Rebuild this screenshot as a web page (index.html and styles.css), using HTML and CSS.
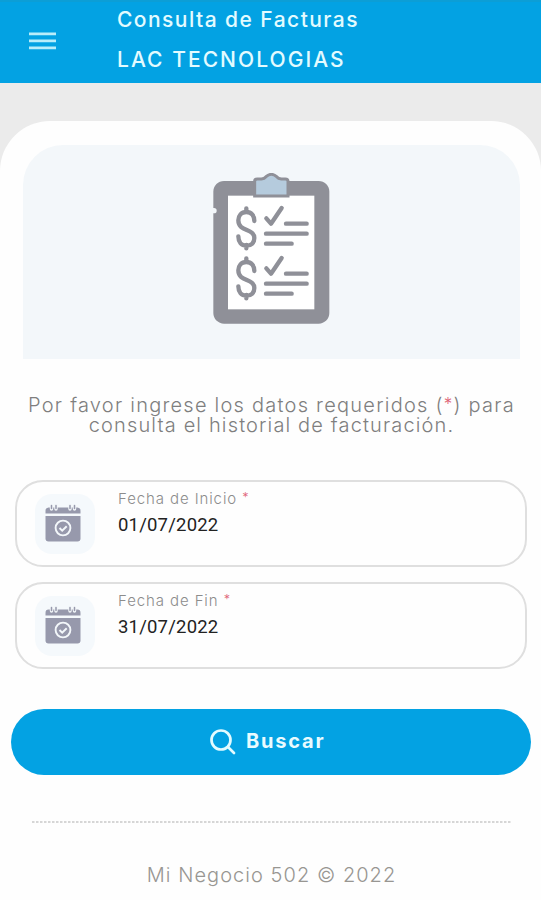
FILE: index.html
```html
<!DOCTYPE html>
<html lang="es">
<head>
<meta charset="utf-8">
<title>Consulta de Facturas</title>
<link rel="stylesheet" href="styles.css">
</head>
<body>
<header class="topbar">
  <svg class="menu" viewBox="0 0 27 18" aria-label="Menú"><path d="M0 1.8h27M0 8.8h27M0 15.8h27"/></svg>
  <div class="titles">
    <h1 class="title">Consulta de Facturas</h1>
    <p class="company">LAC TECNOLOGIAS</p>
  </div>
</header>
<main class="sheet">
  <div class="hero">
    <svg class="clipboard" viewBox="39 24 351 453">
      <rect x="40" y="48" width="348" height="428" rx="32" fill="#8f9098"/>
      <rect x="84" y="92" width="259" height="341" fill="#fff"/>
      <circle cx="42" cy="137" r="8" fill="#f3f7fa"/>
      <path d="M164 93V49q0-7 8-7h12q9-1 14-7 8-7 16-7t16 7q5 6 14 7h12q8 0 8 7v44z" fill="#b5cbdd" stroke="#8f9098" stroke-width="9"/>
      <g id="row" class="ink">
        <path d="M139 130v11M139 240v10M163 168c0-17-9-27-24-27s-24 11-24 25c0 35 48 23 48 53 0 14-9 23-24 23s-24-11-24-28"/>
        <path d="M199 160l14 16 32-47"/>
        <path d="M258 176h62M198 206h122M198 236h77"/>
      </g>
      <use href="#row" y="150"/>
    </svg>
  </div>
  <p class="intro"><span class="line first">Por favor ingrese los datos requeridos (<span class="req">*</span>) para</span><span class="line second">consulta el historial de facturación.</span></p>
  <form class="form">
    <div class="field">
      <div class="tile"><svg class="calendar" viewBox="0 0 36 38"><use href="#cal"/></svg></div>
      <div class="texts"><span class="label">Fecha de Inicio <span class="req">*</span></span><span class="value">01/07/2022</span></div>
    </div>
    <div class="field">
      <div class="tile"><svg class="calendar" viewBox="0 0 36 38">
        <g id="cal">
          <path d="M.5 9.500V6.700q0-3.200 3-3.200h29q3 0 3 3.200v2.800z" fill="#9799ac"/>
          <path d="M.5 12h35v22.500q0 3-3 3h-29q-3 0-3-3z" fill="#9799ac"/>
          <path d="M6.500 1v4M11 1v4M25 1v4M29.500 1v4" stroke="#f3f7fa" stroke-width="3.400" stroke-linecap="round"/>
          <path d="M6.500 1.500v3M11 1.500v3M25 1.500v3M29.500 1.500v3" stroke="#9799ac" stroke-width="1.500" stroke-linecap="round"/>
          <circle cx="18" cy="24" r="7.400" fill="none" stroke="#f3f7fa" stroke-width="1.900"/>
          <path d="M14.500 24l2.700 2.600 4.500-4.400" fill="none" stroke="#f3f7fa" stroke-width="2"/>
        </g>
      </svg></div>
      <div class="texts"><span class="label">Fecha de Fin <span class="req">*</span></span><span class="value">31/07/2022</span></div>
    </div>
    <button class="search" type="button">
      <svg class="lens" viewBox="0 0 26 26"><circle cx="11" cy="11" r="9.500"/><path d="M18 18l6 6"/></svg>
      <span class="search-text">Buscar</span>
    </button>
  </form>
  <svg class="divider" viewBox="0 0 479 2"><path d="M0 1h479"/></svg>
  <footer class="footer">Mi Negocio 502 © 2022</footer>
</main>
</body>
</html>
```
FILE: styles.css
```css
* { box-sizing: border-box; }
body {
  margin: 0;
  height: 900px;
  overflow: hidden;
  background: #ebebeb;
  font-family: Inter, "Liberation Sans", sans-serif;
}
h1, p { margin: 0; }
.topbar {
  height: 83px;
  display: flex;
  background: #03a2e3;
  border-top: 2px solid #0c9ed6;
  color: #e3fbff;
}
.menu {
  width: 27px;
  height: 18px;
  margin: 30px 0 0 29px;
  fill: none;
  stroke: #b9edfa;
  stroke-width: 2.8px;
}
.titles { margin-left: 61px; padding-top: 3px; }
.title, .company {
  font-size: 21px;
  font-weight: 500;
  line-height: 30px;
  white-space: nowrap;
}
.title { letter-spacing: 1.45px; }
.company { margin-top: 10px; letter-spacing: 2.05px; }
.sheet {
  height: 780px;
  margin-top: 38px;
  padding-top: 24px;
  background: #fefefe;
  border-radius: 50px 50px 0 0;
}
.hero {
  width: 497px;
  height: 214px;
  margin-left: 23px;
  padding: 28px 0 0 190px;
  background: #f3f7fa;
  border-radius: 40px 40px 0 0;
}
.clipboard { display: block; width: 117px; height: 151px; }
.ink {
  fill: none;
  stroke: #8f9098;
  stroke-width: 13px;
  stroke-linecap: round;
  stroke-linejoin: round;
}
.intro {
  margin-top: 36px;
  padding-left: 2px;
  color: #7f7f7f;
  font-size: 20px;
  font-weight: 300;
  line-height: 20px;
  text-align: center;
}
.line { display: block; white-space: nowrap; }
.first { letter-spacing: 1.24px; }
.second { letter-spacing: 1.14px; }
.req {
  color: #df6478;
  font-size: .85em;
  line-height: 0;
  vertical-align: 2px;
}
.form { margin-top: 45px; padding: 0 10px 0 11px; }
.field {
  width: 512px;
  height: 87px;
  margin: 0 0 15px 4px;
  padding: 12px 18px;
  display: flex;
  border: 2px solid #dfdfdf;
  border-radius: 28px;
  background: #fefefe;
}
.tile {
  width: 60px;
  height: 60px;
  padding: 10px 0 0 10px;
  border-radius: 17px;
  background: #f5f9fc;
}
.calendar { display: block; width: 36px; height: 38px; }
.texts { margin: -7px 0 0 23px; display: flex; flex-direction: column; }
.label {
  color: #8c8c8c;
  font-size: 15px;
  font-weight: 300;
  line-height: 24px;
  letter-spacing: .9px;
}
.value {
  color: #222;
  font-family: Roboto, sans-serif;
  font-size: 18.5px;
  line-height: 28px;
  letter-spacing: .2px;
}
.search {
  width: 100%;
  height: 66px;
  margin-top: 40px;
  padding: 0 0 0 199px;
  display: flex;
  align-items: center;
  border: 0;
  border-radius: 33px;
  background: #03a2e3;
  color: #e9fbff;
  font-family: inherit;
}
.lens {
  width: 26px;
  height: 26px;
  fill: none;
  stroke: #e3fbff;
  stroke-width: 2.7px;
  stroke-linecap: round;
}
.search-text {
  margin: -2px 0 0 10px;
  font-size: 20px;
  font-weight: 700;
  letter-spacing: 1.8px;
}
.divider {
  display: block;
  width: 479px;
  height: 2px;
  margin: 46px 0 0 32px;
  stroke: #c9c9c9;
  stroke-width: 1.5px;
  stroke-dasharray: 2.5px 1.5px;
}
.footer {
  margin-top: 38px;
  padding-left: 2px;
  color: #989692;
  font-size: 20px;
  font-weight: 300;
  line-height: 28px;
  letter-spacing: 1.05px;
  text-align: center;
}
```
